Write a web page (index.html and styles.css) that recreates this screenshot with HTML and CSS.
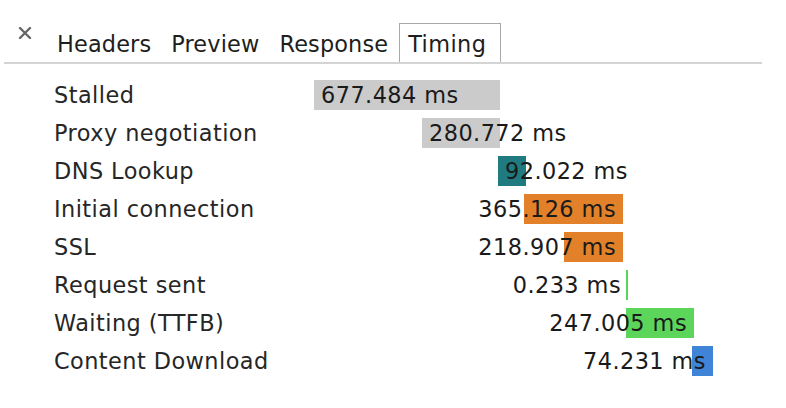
FILE: index.html
```html
<!DOCTYPE html>
<html>
<head>
<meta charset="utf-8">
<link rel="stylesheet" href="styles.css">
</head>
<body>
<div class="tabbar">
  <span class="close"><svg width="14" height="12" viewBox="0 0 14 12"><path d="M2 1 L12 11 M12 1 L2 11" stroke="#666" stroke-width="2.4" stroke-linecap="round"/></svg></span>
  <span class="tab">Headers</span>
  <span class="tab">Preview</span>
  <span class="tab">Response</span>
  <span class="tab active">Timing</span>
</div>
<div class="timing">
  <div class="row"><span class="label">Stalled</span><div class="track"><div class="bar gray start" style="margin-left:0px;width:186px"><span class="val">677.484 ms</span></div></div></div>
  <div class="row"><span class="label">Proxy negotiation</span><div class="track"><div class="bar gray start" style="margin-left:108px;width:78px"><span class="val">280.772 ms</span></div></div></div>
  <div class="row"><span class="label">DNS Lookup</span><div class="track"><div class="bar teal start" style="margin-left:184px;width:28px"><span class="val">92.022 ms</span></div></div></div>
  <div class="row"><span class="label">Initial connection</span><div class="track"><div class="bar orange end" style="margin-left:210px;width:99px"><span class="val">365.126 ms</span></div></div></div>
  <div class="row"><span class="label">SSL</span><div class="track"><div class="bar orange end" style="margin-left:250px;width:59px"><span class="val">218.907 ms</span></div></div></div>
  <div class="row"><span class="label">Request sent</span><div class="track"><div class="bar green end" style="margin-left:312px;width:2px"><span class="val">0.233 ms</span></div></div></div>
  <div class="row"><span class="label">Waiting (TTFB)</span><div class="track"><div class="bar green end" style="margin-left:312px;width:68px"><span class="val">247.005 ms</span></div></div></div>
  <div class="row"><span class="label">Content Download</span><div class="track"><div class="bar blue end" style="margin-left:378px;width:21px"><span class="val">74.231 ms</span></div></div></div>
</div>
</body>
</html>
```
FILE: styles.css
```css
html, body {
  margin: 0;
  padding: 0;
  background: #fff;
}
body {
  font-family: "DejaVu Sans", "Liberation Sans", sans-serif;
  font-size: 22.4px;
  color: #262626;
  width: 786px;
  height: 408px;
  overflow: hidden;
}
.tabbar {
  display: flex;
  align-items: flex-start;
  margin: 23px 0 0 4px;
  width: 758px;
  padding-left: 14px;
  box-sizing: border-box;
  border-bottom: 2px solid #d4d4d4;
  height: 41px;
}
.close {
  display: block;
  width: 14px;
  height: 12px;
  margin-top: 4px;
  margin-right: 15px;
}
.close svg { display: block; }
.tab {
  display: block;
  padding: 3px 10px 0;
  line-height: 36px;
  height: 39px;
  box-sizing: border-box;
  letter-spacing: 0.15px;
  color: #1e1e1e;
}
.tab.active {
  margin-left: 1px;
  padding: 2px 14px 0 8px;
  letter-spacing: 0.4px;
  border: 1px solid #a9a9a9;
  border-bottom: none;
  background: #fff;
}
.timing {
  margin-top: 16px;
  padding-left: 54px;
  display: flex;
  flex-direction: column;
  gap: 8px;
}
.row {
  display: grid;
  grid-template-columns: 260px 400px;
  height: 30px;
  line-height: 30px;
}
.label {
  white-space: nowrap;
  color: #262626;
  letter-spacing: 0.45px;
}
.track {
  display: flex;
  height: 30px;
}
.bar {
  height: 30px;
  display: flex;
  white-space: nowrap;
  box-sizing: border-box;
  flex: none;
}
.bar.start { justify-content: flex-start; padding-left: 7px; }
.bar.end { justify-content: flex-end; }
.val {
  flex: none;
  color: #1a1a1a;
  letter-spacing: 0.45px;
}
.bar.end .val { margin-right: 7px; }
.gray { background: #cbcbcb; }
.teal { background: #1f7b7f; }
.orange { background: #e2812a; }
.green { background: #5cd65a; }
.blue { background: #3f84d6; }
```
